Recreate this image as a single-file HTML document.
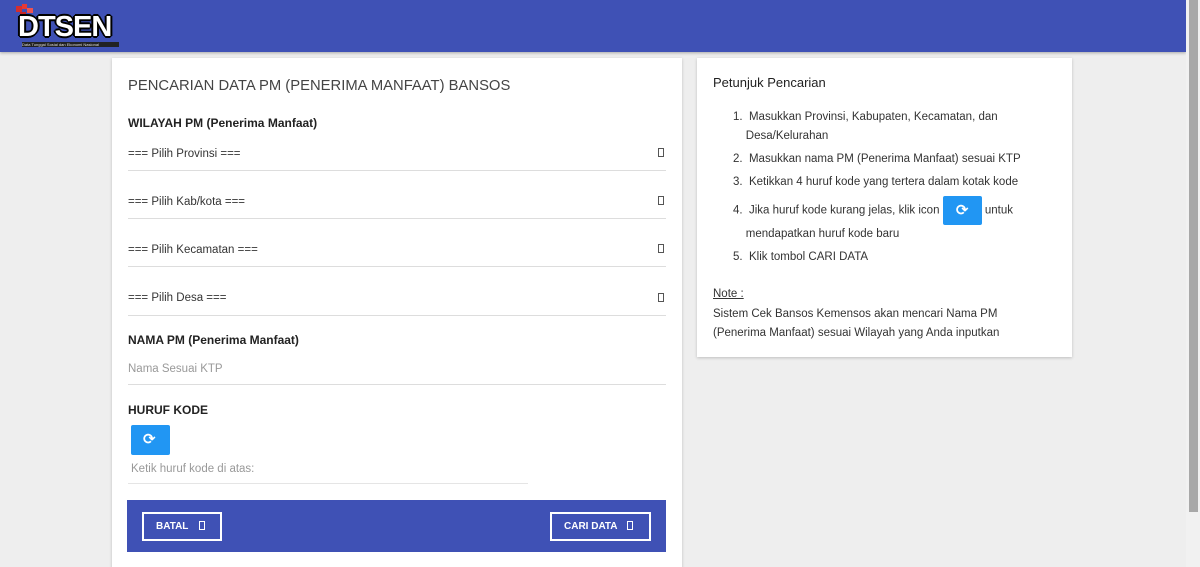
<!DOCTYPE html>
<html><head><meta charset="utf-8"><style>
*{box-sizing:border-box;margin:0;padding:0}
html,body{width:1200px;height:567px;overflow:hidden}
body{background:#eeeeee;font-family:"Liberation Sans","DejaVu Sans",sans-serif;position:relative;color:#333}
.hdr{position:absolute;left:0;top:0;width:1186px;height:52px;background:#3f51b5;box-shadow:0 1px 3px rgba(0,0,0,.3)}
.sb{position:absolute;right:0;top:0;width:14px;height:567px;background:#f1f1f1}
.sb div{position:absolute;left:3px;top:0px;width:9px;height:512px;background:#a8a8a8}
.card{position:absolute;background:#fff;box-shadow:0 1px 3px rgba(0,0,0,.2)}
.t{position:absolute;white-space:nowrap}
.line{position:absolute;height:1px;background:#ddd}
.ic{position:absolute;width:6px;height:9px;border:1px solid #555}
.btn{position:absolute;background:#2196f3;border-radius:2px}
</style></head><body>
<div class="hdr">
 <div style="position:absolute;left:16px;top:6px;width:6px;height:6px;background:#d32f2f"></div>
 <div style="position:absolute;left:22px;top:4px;width:5px;height:5px;background:#e53935"></div>
 <div style="position:absolute;left:27px;top:8px;width:6px;height:5px;background:#ef5350"></div>
 <div style="position:absolute;left:20px;top:12px;width:6px;height:6px;background:#c62828"></div>
 <div class="t" style="left:18px;top:11px;font:bold 29px 'Liberation Sans';color:#fff;letter-spacing:-1px;text-shadow:-2px 0 #000,2px 0 #000,0 -2px #000,0 2px #000,-1px -1px #000,1px 1px #000,-1px 1px #000,1px -1px #000">DTSEN</div>
 <div class="t" style="left:22px;top:42px;width:97px;height:5px;background:#222;font-size:4px;color:#ddd;line-height:5px;overflow:hidden">Data Tunggal Sosial dan Ekonomi Nasional</div>
</div>
<div class="sb"><div></div></div>

<div class="card" style="left:112px;top:58px;width:570px;height:520px">
 <div class="t" style="left:16px;top:20px;font-size:14.8px;color:#444">PENCARIAN DATA PM (PENERIMA MANFAAT) BANSOS</div>
 <div class="t" style="left:16px;top:58px;font-size:12px;font-weight:bold;color:#222">WILAYAH PM (Penerima Manfaat)</div>
 <div class="t" style="left:16px;top:90px;font-size:11.5px">=== Pilih Provinsi ===</div><div class="ic" style="left:546px;top:90px"></div><div class="line" style="left:16px;top:112px;width:538px"></div>
 <div class="t" style="left:16px;top:138px;font-size:11.5px">=== Pilih Kab/kota ===</div><div class="ic" style="left:546px;top:138px"></div><div class="line" style="left:16px;top:160px;width:538px"></div>
 <div class="t" style="left:16px;top:186px;font-size:11.5px">=== Pilih Kecamatan ===</div><div class="ic" style="left:546px;top:186px"></div><div class="line" style="left:16px;top:208px;width:538px"></div>
 <div class="t" style="left:16px;top:234px;font-size:11.5px">=== Pilih Desa ===</div><div class="ic" style="left:546px;top:235px"></div><div class="line" style="left:16px;top:257px;width:538px"></div>
 <div class="t" style="left:16px;top:275px;font-size:12px;font-weight:bold;color:#222">NAMA PM (Penerima Manfaat)</div>
 <div class="t" style="left:16px;top:305px;font-size:11.5px;color:#999">Nama Sesuai KTP</div><div class="line" style="left:16px;top:326px;width:538px"></div>
 <div class="t" style="left:16px;top:345px;font-size:12px;font-weight:bold;color:#222">HURUF KODE</div>
 <div class="btn" style="left:19px;top:367px;width:39px;height:30px"><div class="t" style="left:12px;top:5px;color:#fff;font-size:15px;font-weight:bold">⟳</div></div>
 <div class="t" style="left:19px;top:405px;font-size:11.5px;color:#999">Ketik huruf kode di atas:</div><div class="line" style="left:16px;top:425px;width:400px;background:#e5e5e5"></div>
 <div style="position:absolute;left:15px;top:442px;width:539px;height:52px;background:#3f51b5">
  <div style="position:absolute;left:15px;top:12px;width:80px;height:29px;border:2px solid #fff"><span class="t" style="left:12px;top:7px;color:#fff;font-size:10px;font-weight:bold">BATAL</span><span class="ic" style="left:55px;top:7px;border-color:#fff"></span></div>
  <div style="position:absolute;left:423px;top:12px;width:101px;height:29px;border:2px solid #fff"><span class="t" style="left:12px;top:7px;color:#fff;font-size:10px;font-weight:bold">CARI DATA</span><span class="ic" style="left:75px;top:7px;border-color:#fff"></span></div>
 </div>
</div>

<div class="card" style="left:697px;top:58px;width:375px;height:299px">
 <div class="t" style="left:16px;top:17px;font-size:13px;color:#222">Petunjuk Pencarian</div>
 <div style="position:absolute;left:36px;top:50px;font-size:11.5px;line-height:19px;color:#333;width:320px">
  <div>1.&nbsp; Masukkan Provinsi, Kabupaten, Kecamatan, dan<br>&nbsp;&nbsp;&nbsp;&nbsp;Desa/Kelurahan</div>
  <div style="margin-top:4px">2.&nbsp; Masukkan nama PM (Penerima Manfaat) sesuai KTP</div>
  <div style="margin-top:4px">3.&nbsp; Ketikkan 4 huruf kode yang tertera dalam kotak kode</div>
  <div style="margin-top:4px;position:relative">4.&nbsp; Jika huruf kode kurang jelas, klik icon <span style="display:inline-block;width:39px;height:29px;background:#2196f3;border-radius:2px;vertical-align:middle;color:#fff;text-align:center;line-height:29px;font-weight:bold;font-size:15px">⟳</span> untuk<br>&nbsp;&nbsp;&nbsp;&nbsp;mendapatkan huruf kode baru</div>
  <div style="margin-top:4px">5.&nbsp; Klik tombol CARI DATA</div>
 </div>
 <div class="t" style="left:16px;top:230px;font-size:11.5px;text-decoration:underline">Note :</div>
 <div style="position:absolute;left:16px;top:247px;font-size:11.5px;line-height:19px;width:325px">Sistem Cek Bansos Kemensos akan mencari Nama PM (Penerima Manfaat) sesuai Wilayah yang Anda inputkan</div>
</div>
</body></html>
